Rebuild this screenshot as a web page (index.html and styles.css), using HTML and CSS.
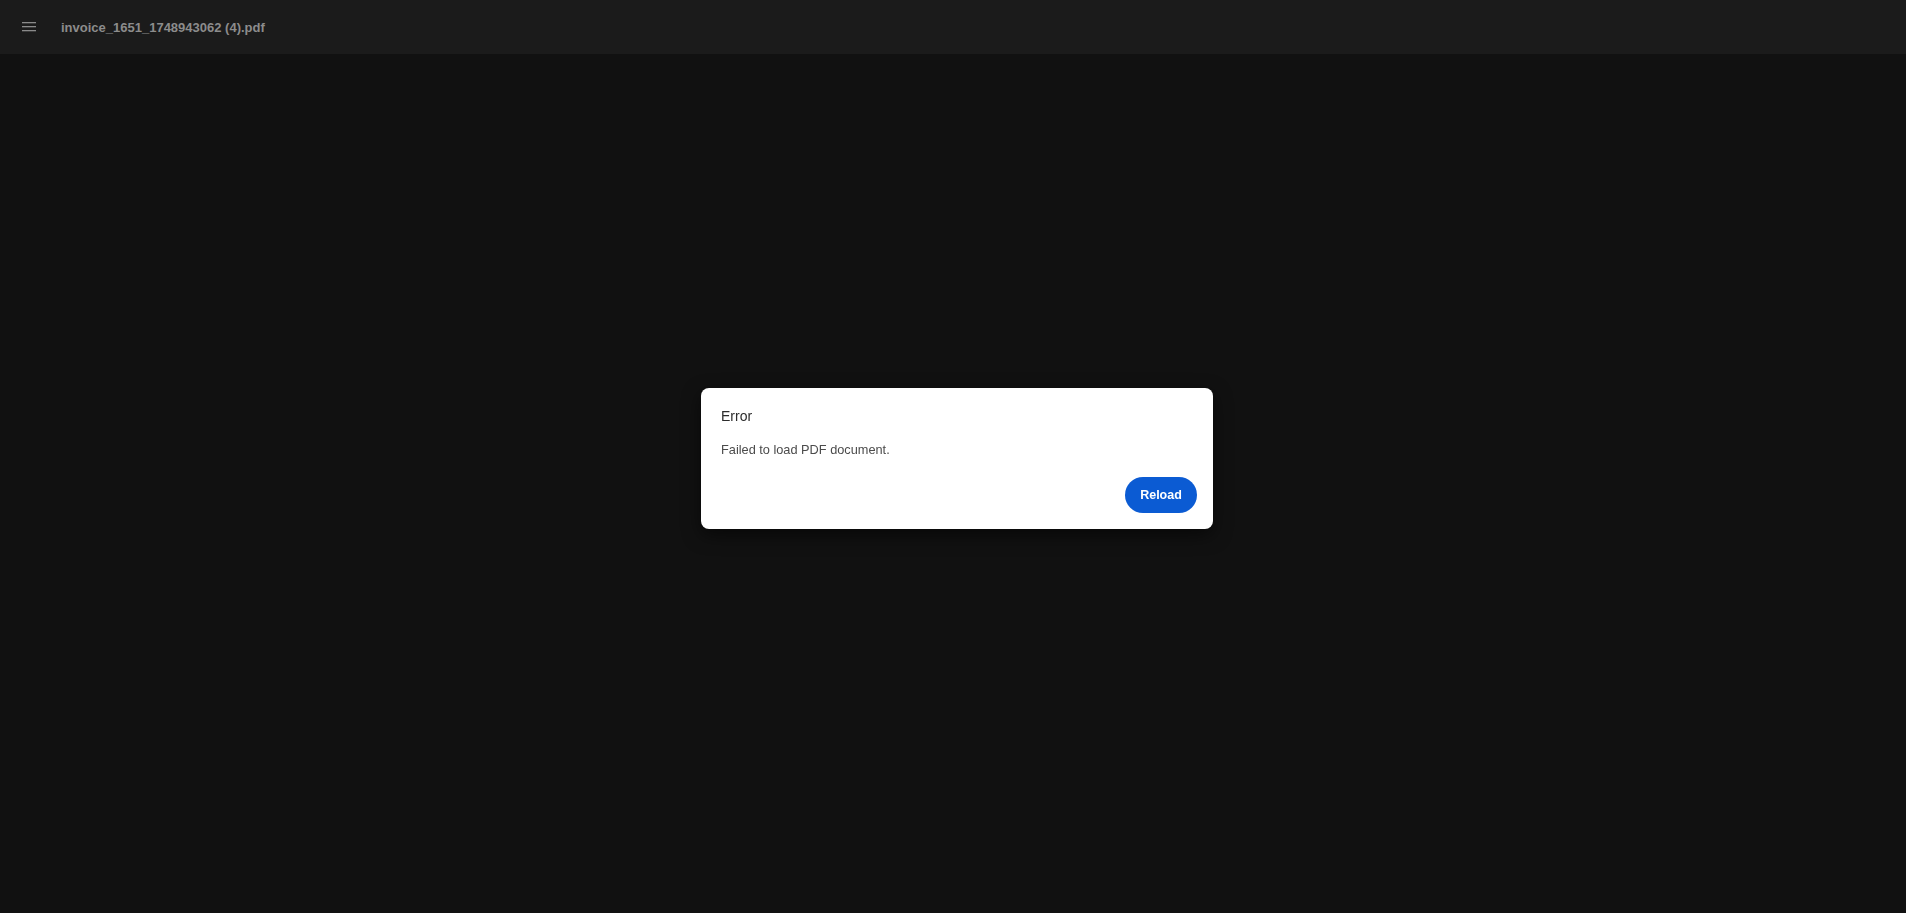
FILE: index.html
```html
<!DOCTYPE html>
<html lang="en">
<head>
<meta charset="utf-8">
<title>invoice_1651_1748943062 (4).pdf</title>
<link rel="stylesheet" href="styles.css">
</head>
<body>
<div class="app">
  <header class="topbar">
    <button class="menu-btn" aria-label="Menu">
      <svg width="14" height="10" viewBox="0 0 14 10"><rect x="0" y="0" width="14" height="1.3" fill="#8a8a8a"/><rect x="0" y="4" width="14" height="1.3" fill="#8a8a8a"/><rect x="0" y="8" width="14" height="1.3" fill="#8a8a8a"/></svg>
    </button>
    <span class="doc-title">invoice_1651_1748943062 (4).pdf</span>
  </header>
  <main class="viewer"></main>
</div>
<div class="overlay">
  <div class="dialog" role="alertdialog">
    <div class="dialog-title">Error</div>
    <div class="dialog-body">Failed to load PDF document.</div>
    <div class="dialog-actions">
      <button class="btn-primary">Reload</button>
    </div>
  </div>
</div>
</body>
</html>
```
FILE: styles.css
```css
html, body {
  margin: 0;
  padding: 0;
  height: 100%;
}
body {
  background: #111111;
  font-family: "Liberation Sans", Arial, sans-serif;
  overflow: hidden;
}
.app {
  display: flex;
  flex-direction: column;
  height: 100%;
}
.topbar {
  height: 54px;
  flex: 0 0 54px;
  background: #1b1b1b;
  display: flex;
  align-items: center;
  box-sizing: border-box;
}
.menu-btn {
  background: none;
  border: none;
  padding: 0;
  margin: 0 0 0 22px;
  width: 14px;
  height: 10px;
  display: flex;
  cursor: pointer;
}
.doc-title {
  margin-left: 25px;
  color: #8c8c8c;
  font-weight: bold;
  font-size: 13px;
  line-height: 18px;
  position: relative;
  top: 1px;
}
.viewer {
  flex: 1;
  background: #111111;
}
.overlay {
  position: fixed;
  inset: 0;
  display: flex;
  align-items: center;
  justify-content: center;
  padding: 4px 0 0 8px;
}
.dialog {
  width: 512px;
  box-sizing: border-box;
  background: #ffffff;
  border-radius: 8px;
  padding: 18px 16px 16px 20px;
  box-shadow: 0 6px 18px rgba(0, 0, 0, 0.55);
}
.dialog-title {
  font-size: 14px;
  line-height: 20px;
  color: #2c2c2c;
}
.dialog-body {
  margin-top: 15px;
  font-size: 12.75px;
  line-height: 18px;
  color: #4b4b4b;
}
.dialog-actions {
  margin-top: 18px;
  display: flex;
  justify-content: flex-end;
}
.btn-primary {
  height: 36px;
  width: 72px;
  border: none;
  border-radius: 18px;
  background: #0b5bd3;
  color: #ffffff;
  font-family: "Liberation Sans", Arial, sans-serif;
  font-weight: bold;
  font-size: 12.5px;
  padding: 0;
  cursor: pointer;
}
```
